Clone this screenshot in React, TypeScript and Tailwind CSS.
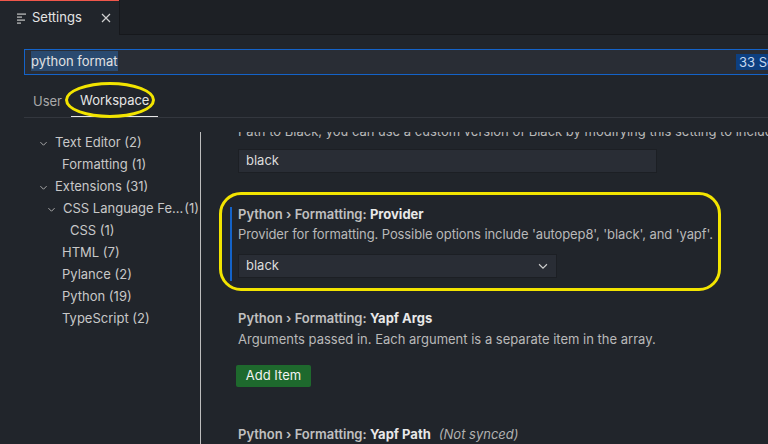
import React from 'react';

const Chevron: React.FC<{ className?: string }> = ({ className }) => (
  <svg viewBox="0 0 16 16" className={className} fill="none" stroke="currentColor" strokeWidth="1.3">
    <path d="M3.5 6 L8 10.5 L12.5 6" />
  </svg>
);

const tree = [
  { label: 'Text Editor (2)', depth: 0, open: true },
  { label: 'Formatting (1)', depth: 1 },
  { label: 'Extensions (31)', depth: 0, open: true },
  { label: 'CSS Language Fe...', count: '(1)', depth: 1, open: true },
  { label: 'CSS (1)', depth: 2 },
  { label: 'HTML (7)', depth: 1 },
  { label: 'Pylance (2)', depth: 1 },
  { label: 'Python (19)', depth: 1 },
  { label: 'TypeScript (2)', depth: 1 },
];

export default function App() {
  return (
    <div className="relative h-[444px] w-[768px] overflow-hidden bg-[#21252b] font-['Inter',sans-serif] text-[13px] text-[#c8c8c8]">
      {/* Tab bar */}
      <div className="flex h-[35px] bg-[#1d2025]">
        <div className="flex w-[119px] items-center border-t border-[#f0574b] bg-[#21252b] pl-[17px]">
          <svg width="10" height="11" viewBox="0 0 10 11" className="text-[#c5c5c5]">
            <rect x="0" y="0.5" width="9" height="1.2" fill="currentColor" />
            <rect x="0" y="3.5" width="5" height="1.2" fill="currentColor" />
            <rect x="0" y="6.5" width="8" height="1.2" fill="currentColor" />
            <rect x="0" y="9.5" width="4" height="1.2" fill="currentColor" />
          </svg>
          <span className="ml-[5px] text-[#e4e4e4]">Settings</span>
          <svg width="10" height="10" viewBox="0 0 10 10" className="ml-[19px] text-[#d0d0d0]" stroke="currentColor" strokeWidth="1.2">
            <path d="M1 1 L9 9 M9 1 L1 9" />
          </svg>
        </div>
        <div className="flex-1 border-b border-l border-[#16181c]" />
      </div>

      {/* Search */}
      <div className="pl-6 pt-[14px]">
        <div className="flex h-[26px] w-[860px] items-center border border-[#1463c9] bg-[#292d35] pl-[6px]">
          <div className="w-[705px] shrink-0">
            <span className="bg-[#2a4a70] py-[2px] text-[#e2e2e2]">python format</span>
          </div>
          <span className="shrink-0 whitespace-nowrap bg-[#0d3f80] px-[3px] leading-[16px] text-[#c6d8ef]">33 Settings Found</span>
        </div>
      </div>

      {/* Scope tabs */}
      <div className="ml-6 mt-[11px] flex h-[32px] border-b border-[#33373e]">
        <div className="flex items-center px-[9px] text-[#a9a9a9]">User</div>
        <div className="flex items-center border-b border-[#e6e6e6] px-[9px] text-[#e6e6e6]">Workspace</div>
      </div>

      {/* Body */}
      <div className="mt-[14px] flex">
        <div className="w-[200px] shrink-0">
          {tree.map((t) => (
            <div
              key={t.label}
              className={`flex h-[22px] items-center ${t.depth === 0 ? 'pl-[38px]' : t.depth === 1 ? (t.open ? 'pl-[46px]' : 'pl-[62px]') : 'pl-[70px]'}`}
            >
              {t.open && <Chevron className="mr-[6px] h-[11px] w-[11px] text-[#b8b8b8]" />}
              <span className="whitespace-nowrap">{t.label}</span>
              {t.count && <span className="ml-auto pr-[1px]">{t.count}</span>}
            </div>
          ))}
        </div>

        <div className="h-[320px] flex-1 overflow-hidden border-l border-[#bdbdbd]">
          <div className="pl-[37px]">
            <div className="-mt-[10px] whitespace-nowrap leading-[18px] text-[#b9b9b9]">
              Path to Black, you can use a custom version of Black by modifying this setting to include the full path.
            </div>
            <div className="mt-[9px] flex h-[24px] w-[419px] items-center border border-[#1c1f24] bg-[#292d35] pl-[7px] text-[#dcdcdc]">
              black
            </div>
          </div>

          {/* Provider (highlighted) */}
          <div className="ml-[18px] mt-[19px] h-[99px] w-[502px] rounded-[22px] border-[3px] border-[#f2e400] pl-[8px] pt-[12px]">
            <div className="border-l-2 border-[#1463c9] pb-[3px] pl-[6px]">
              <div className="leading-[14px] font-semibold text-[#c0c0c0]">
                Python › Formatting: <span className="font-bold text-[#e8e8e8]">Provider</span>
              </div>
              <div className="mt-[4px] whitespace-nowrap leading-[18px] tracking-[-0.1px] text-[#b9b9b9]">
                Provider for formatting. Possible options include 'autopep8', 'black', and 'yapf'.
              </div>
              <div className="mt-[11px] flex h-[24px] w-[319px] items-center justify-between border border-[#1c1f24] bg-[#292d35] pl-[7px] pr-[6px] text-[#dcdcdc]">
                black
                <Chevron className="h-[14px] w-[14px] text-[#cfcfcf]" />
              </div>
            </div>
          </div>

          {/* Yapf Args */}
          <div className="pl-[37px]">
            <div className="mt-[20px] leading-[14px] font-semibold text-[#c0c0c0]">
              Python › Formatting: <span className="font-bold text-[#e8e8e8]">Yapf Args</span>
            </div>
            <div className="mt-[5px] leading-[18px] text-[#b9b9b9]">
              Arguments passed in. Each argument is a separate item in the array.
            </div>
            <button className="ml-[-2px] mt-[17px] flex h-[22px] w-[75px] items-center justify-center rounded-[2px] bg-[#1e692d] text-[#f2f2f2]">
              Add Item
            </button>
            <div className="mt-[40px] leading-[14px] font-semibold text-[#c0c0c0]">
              Python › Formatting: <span className="font-bold text-[#e8e8e8]">Yapf Path</span>
              <span className="ml-[8px] font-normal italic text-[#b0b0b0]">(Not synced)</span>
            </div>
          </div>
        </div>
      </div>

      {/* annotation ellipse around Workspace */}
      <div className="absolute left-[65px] top-[82px] h-[36px] w-[90px] rounded-[50%] border-[3px] border-[#f2e400]" />
    </div>
  );
}
